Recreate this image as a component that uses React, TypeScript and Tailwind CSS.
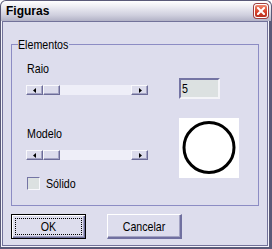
import React from "react";

const font = { fontFamily: '"Liberation Sans", Arial, sans-serif' };

function N({ children, center }: { children: React.ReactNode; center?: boolean }) {
  return (
    <span
      className={
        center
          ? "inline-block origin-center scale-x-[0.82] whitespace-nowrap"
          : "inline-block origin-left scale-x-[0.82] whitespace-nowrap"
      }
    >
      {children}
    </span>
  );
}

function ArrowLeft() {
  return (
    <svg width="4" height="5" viewBox="0 0 4 5">
      <polygon points="3,0 3,5 0,2.5" fill="#000" />
    </svg>
  );
}
function ArrowRight() {
  return (
    <svg width="4" height="5" viewBox="0 0 4 5">
      <polygon points="1,0 1,5 4,2.5" fill="#000" />
    </svg>
  );
}

function ScrollBar() {
  return (
    <div className="flex h-[10px] w-[122px] bg-[#eeeef8]">
      <div className="flex h-full w-[17px] items-center justify-center border-t border-l border-[#f8f8fc] border-r border-b border-r-[#6c6c98] border-b-[#6c6c98] bg-[#dcdcec] shadow-[inset_-1px_-1px_0_#a4a4c4]">
        <ArrowLeft />
      </div>
      <div className="h-full w-[17px] border-t border-l border-[#f8f8fc] border-r border-b border-r-[#6c6c98] border-b-[#6c6c98] bg-[#dcdcec] shadow-[inset_-1px_-1px_0_#a4a4c4]" />
      <div className="flex-1" />
      <div className="flex h-full w-[17px] items-center justify-center border-t border-l border-[#f8f8fc] border-r border-b border-r-[#6c6c98] border-b-[#6c6c98] bg-[#dcdcec] shadow-[inset_-1px_-1px_0_#a4a4c4]">
        <ArrowRight />
      </div>
    </div>
  );
}

export default function App() {
  return (
    <div className="flex h-[249px] w-[272px] flex-col text-[13px] text-black" style={font}>
      {/* Title bar */}
      <div className="flex h-[21px] items-start justify-between rounded-t-[6px] border border-b-0 border-[#5a5a78] bg-[linear-gradient(to_bottom,#ffffff_0%,#ececf2_30%,#d0d0de_70%,#b2b2c6_100%)] pl-[5px] pr-[3px] pt-[3px]">
        <span className="text-[12px] font-bold leading-[15px] text-black">Figuras</span>
        <div className="flex h-[14px] w-[14px] items-center justify-center rounded-[3px] border border-white bg-[linear-gradient(to_bottom,#f08a70,#d8442c_55%,#b83020)] shadow-[0_0_0_1px_#a04040]">
          <svg width="8" height="8" viewBox="0 0 8 8">
            <path d="M1 1 L7 7 M7 1 L1 7" stroke="#fff" strokeWidth="2" strokeLinecap="square" />
          </svg>
        </div>
      </div>
      {/* Frame */}
      <div className="flex-1 border-l border-r-[3px] border-b-2 border-[#5a5a78]">
        <div className="h-full border-l border-r border-b border-[#f4f4fa]">
          <div className="flex h-full flex-col border border-[#72729a] bg-[#dddded] px-[8px] pt-[15px]">
            <fieldset className="m-0 border border-[#8c8cc4] px-0 pb-[15px] pt-0">
              <legend className="ml-[6px] w-[51px] p-0 leading-[15px]">
                <N>Elementos</N>
              </legend>
              <div className="mt-[9px] flex items-start pl-[14px]">
                <div className="flex w-[122px] flex-col">
                  <div className="pl-[1px] leading-[15px]">
                    <N>Raio</N>
                  </div>
                  <div className="mt-[9px]">
                    <ScrollBar />
                  </div>
                  <div className="mt-[31px] pl-[1px] leading-[15px]">
                    <N>Modelo</N>
                  </div>
                  <div className="mt-[9px]">
                    <ScrollBar />
                  </div>
                  <div className="mt-[17px] flex h-[13px] items-center gap-[6px] pl-[1px]">
                    <div className="h-[13px] w-[13px] border border-t-[#7474a4] border-l-[#7474a4] border-r-[#f8f8fc] border-b-[#f8f8fc] bg-[#dce1e1]" />
                    <span className="leading-[13px]">
                      <N>Sólido</N>
                    </span>
                  </div>
                </div>
                <div className="ml-[31px] flex w-[60px] flex-col">
                  <div className="mt-[17px] flex h-[21px] w-[41px] items-center border-2 border-t-[#7474a4] border-l-[#7474a4] border-r-[#f4f4f8] border-b-[#f4f4f8] bg-[#dce1e1] pl-[1px]">
                    <span className="leading-[15px]">
                      <N>5</N>
                    </span>
                  </div>
                  <div className="mt-[19px] h-[60px] w-[60px] bg-white">
                    <svg width="60" height="60" viewBox="0 0 60 60">
                      <circle cx="30" cy="29.5" r="25" fill="none" stroke="#000" strokeWidth="3" />
                    </svg>
                  </div>
                </div>
              </div>
            </fieldset>
            <div className="mt-[8px] flex gap-[21px]">
              <div className="flex h-[25px] w-[75px] items-center justify-center border border-black bg-[#dddded] shadow-[inset_1px_1px_0_#ffffff,inset_-1px_-1px_0_#6c6c98,inset_-2px_-2px_0_#a4a4c4]">
                <div className="flex h-[17px] w-[67px] items-center justify-center border border-dotted border-black">
                  <span className="leading-[15px]">
                    <N center>OK</N>
                  </span>
                </div>
              </div>
              <div className="flex h-[25px] w-[75px] items-center justify-center border-t border-l border-r-2 border-b-2 border-t-white border-l-white border-r-[#7070a0] border-b-[#7070a0] bg-[#dddded] shadow-[inset_-1px_-1px_0_#a4a4c4]">
                <span className="leading-[15px]">
                  <N center>Cancelar</N>
                </span>
              </div>
            </div>
          </div>
        </div>
      </div>
    </div>
  );
}
